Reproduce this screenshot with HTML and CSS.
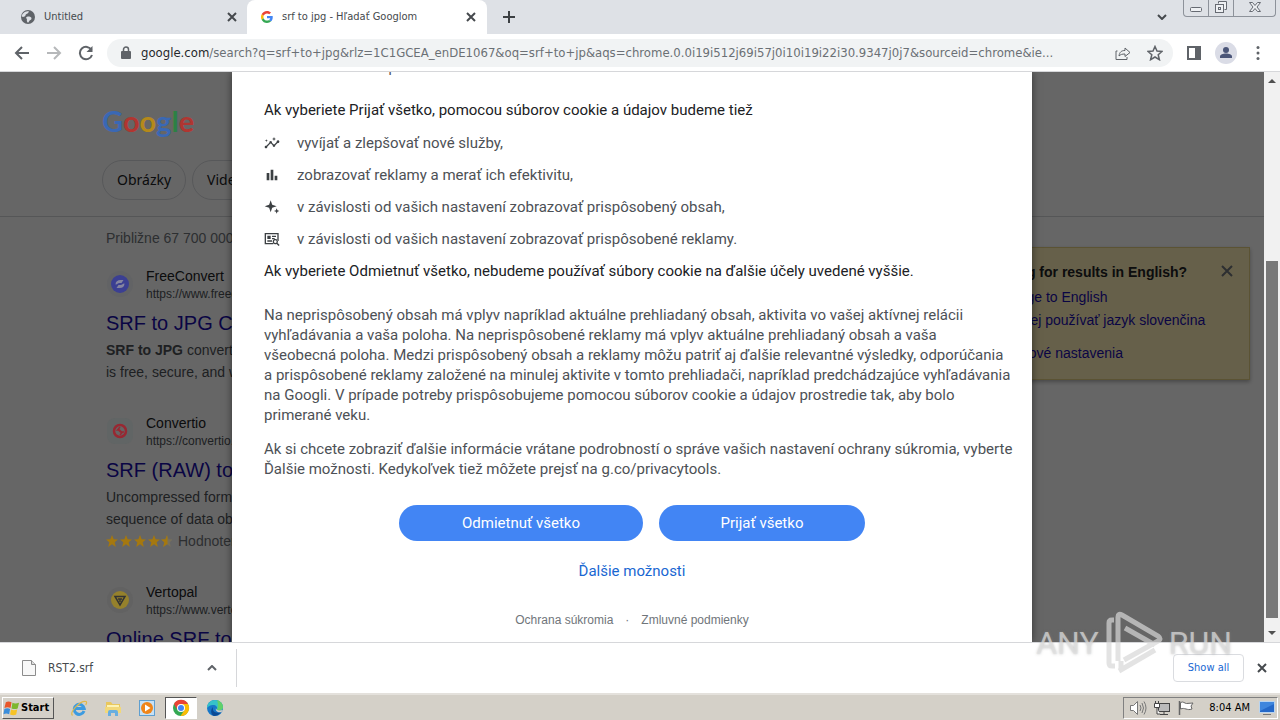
FILE: index.html
```html
<!DOCTYPE html>
<html lang="sk">
<head>
    <meta charset="UTF-8">
    <meta name="viewport" content="width=device-width, initial-scale=1.0">
    <title>srf to jpg - Hľadať Googlom</title>
    <link rel="stylesheet" href="styles.css">
</head>
<body>
    <header class="tab-strip">
        <div class="tab">
            <svg class="tab-icon" viewBox="0 0 16 16"><circle cx="8" cy="8" r="7" fill="#5f6368"/><path d="M3 4.500c2-2 4-2.500 6-2-1 1.500-1 2-2.500 2.500S6 7 4.500 7.500 3 8 1.800 7.500C2 6 2.300 5.200 3 4.500zM8 7.500c2 0 3.500.5 3.500 2s-2 1.500-2.500 3-1.500 1.500-2 0 .5-2-.5-3 0-2 1.500-2z" fill="#dee1e6"/></svg>
            <span class="tab-title">Untitled</span>
            <button class="tab-close" aria-label="Close tab"><svg viewBox="0 0 10 10"><path d="M1 1l8 8M9 1l-8 8"/></svg></button>
        </div>
        <div class="tab tab-active">
            <svg class="tab-icon" viewBox="0 0 48 48"><path fill="#EA4335" d="M24 9.500c3.540 0 6.710 1.220 9.210 3.600l6.850-6.850C35.900 2.380 30.470 0 24 0 14.620 0 6.510 5.380 2.560 13.220l7.980 6.190C12.430 13.720 17.740 9.500 24 9.500z"/><path fill="#4285F4" d="M46.980 24.550c0-1.570-.15-3.090-.38-4.550H24v9.020h12.940c-.58 2.960-2.260 5.480-4.780 7.180l7.730 6c4.510-4.180 7.090-10.360 7.090-17.650z"/><path fill="#FBBC05" d="M10.530 28.590c-.48-1.450-.76-2.990-.76-4.590s.27-3.140.76-4.590l-7.980-6.190C.92 16.460 0 20.120 0 24c0 3.880.92 7.540 2.560 10.780l7.970-6.190z"/><path fill="#34A853" d="M24 48c6.480 0 11.930-2.130 15.890-5.810l-7.730-6c-2.150 1.450-4.920 2.300-8.160 2.300-6.260 0-11.570-4.220-13.470-9.910l-7.980 6.190C6.510 42.620 14.620 48 24 48z"/></svg>
            <span class="tab-title">srf to jpg - Hľadať Googlom</span>
            <button class="tab-close" aria-label="Close tab"><svg viewBox="0 0 10 10"><path d="M1 1l8 8M9 1l-8 8"/></svg></button>
        </div>
        <button class="new-tab" aria-label="New tab"><svg viewBox="0 0 12 12"><path d="M6 0v12M0 6h12"/></svg></button>
        <button class="tab-search" aria-label="Search tabs"><svg viewBox="0 0 10 6"><path d="M1 1l4 4 4-4"/></svg></button>
        <div class="window-buttons">
            <button aria-label="Minimize"><svg viewBox="0 0 14 14"><rect x="1.500" y="7.500" width="11" height="4" rx="1"/></svg></button>
            <button aria-label="Restore"><svg viewBox="0 0 14 14"><path d="M4.500 3.500v-2h8v8h-2"/><rect x="1.500" y="4.500" width="8" height="8"/><rect x="4.500" y="7.500" width="2" height="2"/></svg></button>
            <button class="window-close" aria-label="Close"><svg viewBox="0 0 14 14"><path d="M1.500 2.500h3l2.500 3 2.500-3h3L9 7l3.500 4.500h-3L7 8.500l-2.500 3h-3L5 7z"/></svg></button>
        </div>
    </header>

    <nav class="toolbar">
        <div class="nav-buttons">
            <button class="tool" aria-label="Back"><svg viewBox="0 0 16 16"><path d="M15 8H2M8 2L2 8l6 6"/></svg></button>
            <button class="tool tool-off" aria-label="Forward"><svg viewBox="0 0 16 16"><path d="M1 8h13M8 2l6 6-6 6"/></svg></button>
            <button class="tool" aria-label="Reload"><svg viewBox="0 0 16 16"><path d="M13.500 5A6.200 6.200 0 1 0 14 10"/><path d="M14.500 1v6h-6z" fill="#5f6368" stroke="none"/></svg></button>
        </div>
        <div class="address">
            <svg class="lock" viewBox="0 0 10 14"><rect x="0" y="5" width="10" height="8" rx="1" fill="#5f6368"/><path d="M2.500 6V3.500a2.500 2.500 0 0 1 5 0V6" fill="none" stroke="#5f6368" stroke-width="1.500"/></svg>
            <div class="url"><span class="host">google.com</span>/search?q=srf+to+jpg&amp;rlz=1C1GCEA_enDE1067&amp;oq=srf+to+jp&amp;aqs=chrome.0.0i19i512j69i57j0i10i19i22i30.9347j0j7&amp;sourceid=chrome&amp;ie...</div>
            <button class="tool tool-thin" aria-label="Share"><svg viewBox="0 0 16 16"><path d="M2.500 6H1v8.500h11V12M4 11c.5-4 2.500-5.500 6-5.500V3l5 4.500-5 4V9c-3 0-4.500.5-6 2z"/></svg></button>
            <button class="tool tool-star" aria-label="Bookmark"><svg viewBox="0 0 16 16"><path d="M8 1.500l2 4.600 5 .4-3.800 3.300 1.200 4.900L8 12l-4.400 2.700 1.200-4.900L1 6.500l5-.4z"/></svg></button>
        </div>
        <button class="tool" aria-label="Side panel"><svg viewBox="0 0 16 16"><rect x="2" y="2" width="12" height="12"/><path d="M10 2h4v12h-4z" fill="#5f6368"/></svg></button>
        <button class="tool avatar" aria-label="Profile"><svg viewBox="0 0 22 22"><circle cx="11" cy="11" r="11" fill="#dadce6"/><circle cx="11" cy="8" r="3" fill="#4a5578"/><path d="M5 16v-1.500c0-2 3-3 6-3s6 1 6 3V16z" fill="#4a5578"/></svg></button>
        <button class="tool" aria-label="Menu"><svg viewBox="0 0 16 16"><g fill="#5f6368" stroke="none"><circle cx="8" cy="2.500" r="1.500"/><circle cx="8" cy="8" r="1.500"/><circle cx="8" cy="13.500" r="1.500"/></g></svg></button>
    </nav>

    <main class="viewport">
        <div class="page">
            <div class="page-top">
                <div class="logo"><span class="g-blue">G</span><span class="g-red">o</span><span class="g-yellow">o</span><span class="g-blue">g</span><span class="g-green">l</span><span class="g-red">e</span></div>
                <div class="chips">
                    <a class="chip" href="#">Obrázky</a>
                    <a class="chip" href="#">Videá</a>
                </div>
            </div>
            <div class="columns">
                <div class="results">
                    <p class="stats">Približne 67 700 000 výsledkov</p>
                    <article class="result">
                        <div class="source">
                            <svg class="favicon" viewBox="0 0 28 28"><circle cx="14" cy="14" r="13" fill="#626365"/><circle cx="14" cy="14" r="9" fill="#3b3f92"/><path d="M9.500 14.500c0-3 2-4.500 5-4.500h3l-2 3h-2c-2 0-2.500 2-4 1.500zM18.500 13.500c0 3-2 4.500-5 4.500h-3l2-3h2c2 0 2.500-2 4-1.500z" fill="#8585a0"/></svg>
                            <div><div class="site">FreeConvert</div><div class="link">https://www.freeconvert.com</div></div>
                        </div>
                        <h3><a href="#">SRF to JPG Converter</a></h3>
                        <p><b>SRF to JPG</b> converter. Best way<br>is free, secure, and works</p>
                    </article>
                    <article class="result">
                        <div class="source">
                            <svg class="favicon" viewBox="0 0 28 28"><rect x="1" y="1" width="26" height="26" rx="8" fill="#616565"/><circle cx="14" cy="14" r="6" fill="#666" stroke="#982832" stroke-width="2.500"/><path d="M14 10l-2.500 3h2l2 2H18M14 18l2.500-3h-2l-2-2" fill="none" stroke="#982832" stroke-width="1.500"/></svg>
                            <div><div class="site">Convertio</div><div class="link">https://convertio.co</div></div>
                        </div>
                        <h3><a href="#">SRF (RAW) to JPG</a></h3>
                        <p>Uncompressed format<br>sequence of data objects</p>
                        <div class="rating">
                            <svg class="stars" viewBox="0 0 66 12"><defs><path id="star" d="M6 0l1.700 4.200 4.300.2-3.300 2.800L9.800 12 6 9.300 2.200 12l1.100-4.800L0 4.400l4.300-.2z"/><clipPath id="half"><path d="M0 0h6.500v12H0z"/></clipPath></defs><g fill="#a5780f"><use href="#star"/><use href="#star" x="14"/><use href="#star" x="28"/><use href="#star" x="42"/><use href="#star" transform="translate(55)" fill="#77705c"/><g transform="translate(55)"><use href="#star" clip-path="url(#half)"/></g></g></svg>
                            <span>Hodnotenie: 4,7</span>
                        </div>
                    </article>
                    <article class="result">
                        <div class="source">
                            <svg class="favicon" viewBox="0 0 28 28"><circle cx="14" cy="14" r="13" fill="#626262"/><circle cx="14" cy="14" r="9" fill="#95812c"/><path d="M9 10.500h10L14 19z M12 13h4M14 13v3" fill="none" stroke="#333" stroke-width="1.500"/></svg>
                            <div><div class="site">Vertopal</div><div class="link">https://www.vertopal.com</div></div>
                        </div>
                        <h3><a href="#">Online SRF to JPG</a></h3>
                    </article>
                </div>
                <aside class="language-card">
                    <button class="card-close" aria-label="Close"><svg viewBox="0 0 12 12"><path d="M1 1l10 10M11 1L1 11"/></svg></button>
                    <h2>Looking for results in English?</h2>
                    <a href="#">Change to English</a>
                    <a href="#">Naďalej používať jazyk slovenčina</a>
                    <a class="card-settings" href="#">Jazykové nastavenia</a>
                </aside>
            </div>
        </div>

        <div class="scrollbar">
            <svg viewBox="0 0 8 4"><path d="M0 4l4-4 4 4z"/></svg>
            <div class="scroll-thumb"></div>
            <svg viewBox="0 0 8 4"><path d="M0 0l4 4 4-4z"/></svg>
        </div>

        <div class="backdrop">
            <section class="dialog" role="dialog" aria-label="Cookies">
                <p class="dialog-intro">kvalitu služieb podľa</p>
                <h2>Ak vyberiete Prijať všetko, pomocou súborov cookie a údajov budeme tiež</h2>
                <ul>
                    <li><svg viewBox="0 0 24 24"><path d="M21 8c-1.450 0-2.260 1.440-1.930 2.510l-3.550 3.560c-.3-.09-.74-.09-1.040 0l-2.550-2.550C12.270 10.450 11.460 9 10 9c-1.450 0-2.270 1.440-1.930 2.520l-4.560 4.550C2.440 15.740 1 16.550 1 18c0 1.100.9 2 2 2 1.450 0 2.260-1.440 1.930-2.510l4.550-4.560c.3.090.74.090 1.040 0l2.550 2.550C12.730 16.550 13.540 18 15 18c1.450 0 2.270-1.440 1.930-2.520l3.560-3.550C21.560 12.260 23 11.450 23 10c0-1.100-.9-2-2-2zM15 9l.94-2.070L18 6l-2.060-.93L15 3l-.92 2.070L12 6l2.080.93zM3.500 11L4 9l2-.5L4 8l-.5-2L3 8l-2 .5L3 9z"/></svg>vyvíjať a zlepšovať nové služby,</li>
                    <li><svg viewBox="0 0 24 24"><path d="M4 9h4v11H4zM16 13h4v7h-4zM10 4h4v16h-4z"/></svg>zobrazovať reklamy a merať ich efektivitu,</li>
                    <li><svg viewBox="0 0 24 24"><path d="M10 2l2.300 6.700L19 11l-6.700 2.300L10 20l-2.300-6.700L1 11l6.700-2.300zM19 14l1.200 2.800L23 18l-2.800 1.200L19 22l-1.200-2.800L15 18l2.800-1.200z"/></svg>v závislosti od vašich nastavení zobrazovať prispôsobený obsah,</li>
                    <li><svg viewBox="0 0 24 24"><path d="M1 3h21v12h-2V5H3v13h11v2H1zM5 7h5v5H5zM12 7h6v2h-6zM12 10.500h4v2h-4zM5 14h7v2H5zM17 12a4 4 0 0 1 3.400 6l3 3-1.500 1.500-3-3A4 4 0 1 1 17 12zm0 2a2 2 0 1 0 0 4 2 2 0 0 0 0-4z" fill-rule="evenodd"/></svg>v závislosti od vašich nastavení zobrazovať prispôsobené reklamy.</li>
                </ul>
                <p class="reject-note">Ak vyberiete Odmietnuť všetko, nebudeme používať súbory cookie na ďalšie účely uvedené vyššie.</p>
                <p class="about">Na neprispôsobený obsah má vplyv napríklad aktuálne prehliadaný obsah, aktivita vo vašej aktívnej relácii<br>vyhľadávania a vaša poloha. Na neprispôsobené reklamy má vplyv aktuálne prehliadaný obsah a vaša<br>všeobecná poloha. Medzi prispôsobený obsah a reklamy môžu patriť aj ďalšie relevantné výsledky, odporúčania<br>a prispôsobené reklamy založené na minulej aktivite v tomto prehliadači, napríklad predchádzajúce vyhľadávania<br>na Googli. V prípade potreby prispôsobujeme pomocou súborov cookie a údajov prostredie tak, aby bolo<br>primerané veku.</p>
                <p class="more-info">Ak si chcete zobraziť ďalšie informácie vrátane podrobností o správe vašich nastavení ochrany súkromia, vyberte<br>Ďalšie možnosti. Kedykoľvek tiež môžete prejsť na g.co/privacytools.</p>
                <div class="choices">
                    <button class="choice choice-reject">Odmietnuť všetko</button>
                    <button class="choice choice-accept">Prijať všetko</button>
                </div>
                <a class="more-options" href="#">Ďalšie možnosti</a>
                <div class="dialog-footer">
                    <a href="#">Ochrana súkromia</a><span>·</span><a href="#">Zmluvné podmienky</a>
                </div>
            </section>
        </div>
    </main>

    <div class="downloads">
        <button class="download">
            <svg class="file-icon" viewBox="0 0 14 16"><path d="M.5.5h9l4 4v11H.5z" fill="#f8f8f8" stroke="#8c8c8c"/><path d="M9.500.5v4h4" fill="#ddd" stroke="#8c8c8c"/></svg>
            <span>RST2.srf</span>
            <svg class="chevron" viewBox="0 0 10 6"><path d="M1 5l4-4 4 4"/></svg>
        </button>
        <button class="show-all">Show all</button>
        <button class="close-shelf" aria-label="Close"><svg viewBox="0 0 10 10"><path d="M1 1l8 8M9 1l-8 8"/></svg></button>
        <div class="watermark">
            <span>ANY</span>
            <svg viewBox="0 0 58 64"><path d="M9 9H7q-3 0-3 3v40q0 3 3 3h3M13 50V6q0-4 4-2l36 21q4 3 0 5L19 49M20 17l30 17M14 60l36-21M16 50v8"/></svg>
            <span>RUN</span>
        </div>
    </div>

    <footer class="taskbar">
        <button class="start"><svg viewBox="0 0 18 16"><path d="M3 2c2-1.500 4-1 6 0L8 8c-2-1-4-1.200-6.500 0z" fill="#e8562a"/><path d="M10 2.500c2 1 4 1 7 0l-1.500 6c-2 .8-4 1-6.500 0z" fill="#7db72f"/><path d="M1.500 9c2-1 4-1 6 0l-1 5.500c-2-1-4-1-6 0z" fill="#3a8ddb"/><path d="M8.500 9.500c2 1 4 1 6.500 0L14 15c-2 1-4 1-6.500 0z" fill="#f7c325"/></svg>Start</button>
        <div class="quick">
            <button aria-label="Internet Explorer"><svg viewBox="0 0 18 18"><path d="M14 12A5 5 0 1 1 14.200 9.500H5" fill="none" stroke="#3d9be0" stroke-width="3"/><path d="M2.500 16.500C-1 13 11 1 16 2.500c1 .5.500 2-.3 3.500" fill="none" stroke="#e0b84a" stroke-width="1.200"/></svg></button>
            <button aria-label="Explorer"><svg viewBox="0 0 18 18"><path d="M2 3h5l1.500 2H16v9H2z" fill="#e9c75d"/><path d="M3 6h12v3H3z" fill="#fdf3b5"/><path d="M1 8h16v6H1z" fill="#f2d879"/><path d="M4 17v-4q0-2 2-2h6q2 0 2 2v4h-3v-3H7v3z" fill="#67aee0"/></svg></button>
            <button aria-label="Media Player"><svg viewBox="0 0 18 18"><rect x="1.500" y="1.500" width="15" height="15" fill="#c7e1f5" stroke="#5f9fd0"/><circle cx="9" cy="9" r="6" fill="#f08519"/><path d="M7 5.500v7L12.500 9z" fill="#fff"/></svg></button>
            <button class="task-active" aria-label="Chrome"><svg viewBox="0 0 18 18"><circle cx="9" cy="9" r="8" fill="#34a853"/><path d="M2 5A8 8 0 0 1 16 5H9L5.500 11z" fill="#ea4335"/><path d="M16 5a8 8 0 0 1-7.500 12L12.500 11 9 5z" fill="#fbbc05"/><circle cx="9" cy="9" r="4" fill="#fff"/><circle cx="9" cy="9" r="3" fill="#4285f4"/></svg></button>
            <button aria-label="Edge"><svg viewBox="0 0 18 18"><circle cx="9" cy="9" r="8" fill="#1677c8"/><path d="M1 9C1 4 5 1 9 1s8 3 8 7c0 3-3 4-6 3 1-3-1-5-4-5-3 0-5 1.500-6 3z" fill="#36c2c9"/><path d="M11 1.300c3 .7 6 3 6 6.700 0 3-3 4-6 3 1.500-4 1-7 0-9.700z" fill="#61d06a"/><path d="M7 8c-1 4 2 7 8 5-2 3-5 4-7 4-3-1-4-6-1-9z" fill="#0c4a94"/><path d="M10 9c0 2 2 3 7 2l-1.500 2C12 14 9 12 10 9z" fill="#d4d0c8"/></svg></button>
        </div>
        <div class="tray">
            <svg viewBox="0 0 18 16"><path d="M1.500 5.500h3l4-4v13l-4-4h-3z" fill="#fff" stroke="#777"/><path d="M11 5q2 3 0 6M13 3q3 5 0 10M15 1.500q4 6.500 0 13" fill="none" stroke="#777"/></svg>
            <svg viewBox="0 0 18 16"><rect x="5.500" y="3.500" width="11" height="8" fill="#bbb" stroke="#444"/><path d="M7 14.500h8M11 12v2" stroke="#444"/><path d="M1.500 3.500h5v4h-5zM2.500 1v2M5.500 1v2M4 8v6h3" fill="#fff" stroke="#444"/></svg>
            <svg viewBox="0 0 18 16"><path d="M2.500 1v14" stroke="#666" stroke-width="1.500"/><path d="M3.500 2.500c3-1.500 4 1 6 1l6.500-.5-2 3 1 3c-3 1-4 .5-6 0s-3-1-5.500 0z" fill="#fff" stroke="#666"/></svg>
            <span class="clock">8:04 AM</span>
            <svg viewBox="0 0 18 16"><rect x="1.500" y="1.500" width="15" height="11" fill="#2468c8" stroke="#b9d4ef"/><path d="M2 11l14-7v-2H2z" fill="#3f86dd"/><path d="M5 14.500h8" stroke="#777"/></svg>
        </div>
    </footer>
</body>
</html>
```

FILE: styles.css
```css
* {
    box-sizing: border-box;
}
body {
    margin: 0;
    height: 100vh;
    display: flex;
    flex-direction: column;
    overflow: hidden;
    background: #fff;
    font-family: "Liberation Sans", Arial, sans-serif;
    font-size: 14px;
    line-height: 20px;
    color: #4d5156;
}
h2, h3, p, ul {
    margin: 0;
    padding: 0;
    font-size: inherit;
    font-weight: normal;
}
a {
    text-decoration: none;
    color: inherit;
}
button {
    padding: 0;
    border: none;
    background: none;
    font: inherit;
    color: inherit;
    cursor: pointer;
}
svg {
    display: block;
    flex: none;
}

/* tabs */
.tab-strip {
    display: flex;
    height: 34px;
    flex: none;
    background: #dee1e6;
    font-family: "DejaVu Sans Condensed", Tahoma, sans-serif;
    font-size: 11px;
    color: #45494d;
}
.tab {
    display: flex;
    align-items: center;
    width: 247px;
    padding: 0 10px 0 20px;
    gap: 8px;
}
.tab-active {
    width: 240px;
    padding: 0 11px 0 14px;
    background: #fff;
    border-radius: 8px 8px 0 0;
}
.tab-active .tab-icon {
    width: 12px;
    height: 12px;
    margin-right: 1px;
}
.tab-icon {
    width: 16px;
    height: 16px;
}
.tab-title {
    flex: 1;
    white-space: nowrap;
}
.tab-close svg, .close-shelf svg {
    width: 10px;
    height: 10px;
    fill: none;
    stroke: #45494d;
    stroke-width: 2;
}
.new-tab, .tab-search {
    padding: 0 16px;
}
.new-tab svg {
    width: 12px;
    height: 12px;
    stroke: #3c4043;
    stroke-width: 2;
}
.tab-search {
    margin-left: auto;
}
.tab-search svg {
    width: 10px;
    height: 6px;
    fill: none;
    stroke: #45494d;
    stroke-width: 2;
}
.window-buttons {
    display: flex;
    height: 17px;
    margin-right: 4px;
    border: 1px solid #8d929a;
    border-top: none;
    border-radius: 0 0 4px 4px;
}
.window-buttons button {
    width: 25px;
    display: flex;
    justify-content: center;
    border-right: 1px solid #8d929a;
}
.window-buttons .window-close {
    width: 41px;
    border-right: none;
}
.window-buttons svg {
    width: 14px;
    height: 14px;
    fill: #eef0f3;
    stroke: #666a72;
}

/* toolbar */
.toolbar {
    display: flex;
    align-items: center;
    height: 38px;
    flex: none;
    padding: 0 14px;
    gap: 13px;
    border-bottom: 1px solid #d6d7da;
}
.nav-buttons {
    display: flex;
    gap: 16px;
}
.tool svg {
    width: 16px;
    height: 16px;
    fill: none;
    stroke: #5f6368;
    stroke-width: 2;
}
.tool-off svg {
    stroke: #b6b8ba;
}
.tool-thin svg {
    stroke-width: 1;
}
.tool-star svg {
    stroke-width: 1.5;
}
.avatar svg {
    width: 22px;
    height: 22px;
    stroke: none;
}
.address {
    display: flex;
    align-items: center;
    flex: 1;
    min-width: 0;
    height: 28px;
    padding: 0 10px 0 14px;
    gap: 16px;
    background: #f1f3f4;
    border-radius: 14px;
}
.lock {
    width: 10px;
    height: 14px;
}
.url {
    flex: 1;
    min-width: 0;
    margin-left: -6px;
    white-space: nowrap;
    font-family: "DejaVu Sans Condensed", Tahoma, sans-serif;
    font-size: 13px;
    color: #6b7075;
}
.host {
    color: #26282b;
}

/* search page */
.viewport {
    position: relative;
    display: flex;
    flex: 1;
    min-height: 0;
    overflow: hidden;
}
.page {
    flex: 1;
    min-width: 0;
}
.page-top {
    padding: 32px 0 16px 102px;
    border-bottom: 1px solid #d5d7da;
}
.logo {
    position: relative;
    z-index: 2;
    width: max-content;
    font-family: Lato, sans-serif;
    font-size: 29px;
    font-weight: bold;
    line-height: 34px;
}
.g-blue { color: #3a68b4; }
.g-red { color: #b03631; }
.g-yellow { color: #b5891a; }
.g-green { color: #2c8144; }
.chips {
    display: flex;
    gap: 6px;
    margin-top: 22px;
}
.chip {
    padding: 9px 14px;
    border: 1px solid #dadce0;
    border-radius: 20px;
    font-family: "Noto Sans", sans-serif;
    color: #202124;
}
.columns {
    display: flex;
    justify-content: space-between;
    padding: 11px 14px 0 106px;
}
.stats {
    color: #70757a;
}
.result {
    width: 600px;
    padding-top: 18px;
    margin-bottom: 12px;
}
.source {
    display: flex;
    align-items: center;
    gap: 12px;
    color: #202124;
}
.site {
    line-height: 20px;
}
.link {
    font-size: 12px;
    line-height: 16px;
    color: #4d5156;
}
.favicon {
    position: relative;
    z-index: 2;
    width: 28px;
    height: 28px;
}
.result h3 {
    margin: 8px 0 3px;
    font-size: 20px;
    line-height: 26px;
    color: #1a0dab;
}
.result p {
    line-height: 22px;
}
.rating {
    display: flex;
    align-items: center;
    gap: 6px;
    line-height: 22px;
    color: #70757a;
}
.stars {
    position: relative;
    z-index: 2;
    width: 66px;
    height: 12px;
}
.language-card {
    position: relative;
    align-self: flex-start;
    width: 288px;
    margin-top: 19px;
    padding: 14px 18px;
    background: #fff0b8;
    border: 1px solid #e3cf82;
    box-shadow: 0 2px 4px rgba(0, 0, 0, 0.3);
    color: #1a0dab;
}
.language-card h2 {
    margin-bottom: 4px;
    font-weight: bold;
    color: #202124;
}
.language-card a {
    display: block;
    padding-left: 12px;
    line-height: 23px;
}
.language-card .card-settings {
    margin-top: 10px;
}
.card-close {
    position: absolute;
    top: 17px;
    right: 16px;
}
.card-close svg {
    width: 12px;
    height: 12px;
    stroke: #70757a;
    stroke-width: 2;
}
.scrollbar {
    display: flex;
    flex-direction: column;
    align-items: center;
    width: 16px;
    padding: 7px 0;
    background: #f1f1f1;
}
.scrollbar svg {
    width: 8px;
    height: 4px;
    fill: #505050;
}
.scroll-thumb {
    flex: 1;
    width: 12px;
    margin: 178px 0 13px;
    background: #797979;
}

/* consent dialog */
.backdrop {
    position: absolute;
    inset: 0 16px 0 0;
    z-index: 1;
    display: flex;
    justify-content: center;
    background: rgba(0, 0, 0, 0.6);
}
.dialog {
    display: flex;
    flex-direction: column;
    justify-content: flex-end;
    width: 800px;
    padding: 0 32px 12px;
    background: #fff;
    box-shadow: 0 0 8px rgba(0, 0, 0, 0.5);
    font-family: Roboto, sans-serif;
    font-size: 15px;
    white-space: nowrap;
}
.dialog-intro {
    margin: 0 0 23px 33px;
    font-size: 14px;
}
.dialog h2 {
    color: #202124;
    margin-bottom: 7px;
}
.dialog li {
    display: flex;
    align-items: center;
    gap: 17px;
    line-height: 32px;
}
.dialog li svg {
    width: 16px;
    height: 16px;
    fill: #3c4043;
}
.reject-note {
    margin: 6px 0 24px;
    color: #202124;
}
.about {
    margin-bottom: 14px;
}
.choices {
    display: flex;
    justify-content: center;
    gap: 16px;
    margin: 26px 0 20px;
}
.choice {
    height: 36px;
    border-radius: 18px;
    background: #4285f4;
    color: #fff;
}
.choice-reject {
    width: 244px;
}
.choice-accept {
    width: 206px;
}
.more-options {
    align-self: center;
    margin-bottom: 29px;
    color: #1967d2;
}
.dialog-footer {
    display: flex;
    justify-content: center;
    gap: 12px;
    font-family: "Liberation Sans", Arial, sans-serif;
    font-size: 12px;
    color: #70757a;
}

/* download shelf */
.downloads {
    position: relative;
    z-index: 3;
    display: flex;
    align-items: center;
    height: 51px;
    flex: none;
    padding-right: 13px;
    border-top: 1px solid #d6d7da;
    font-family: "DejaVu Sans Condensed", Tahoma, sans-serif;
    font-size: 12px;
    color: #45494d;
}
.download {
    display: flex;
    align-items: center;
    gap: 12px;
    width: 237px;
    height: 38px;
    padding: 0 19px 0 22px;
    border-right: 1px solid #d6d7da;
}
.file-icon {
    width: 14px;
    height: 16px;
}
.chevron {
    width: 10px;
    height: 6px;
    margin-left: auto;
    fill: none;
    stroke: #5f6368;
    stroke-width: 2;
}
.show-all {
    margin-left: auto;
    width: 71px;
    height: 28px;
    border: 1px solid #dadce0;
    border-radius: 4px;
    font-size: 11px;
    color: #1967d2;
}
.close-shelf {
    margin-left: 13px;
}
.watermark {
    position: absolute;
    right: 48px;
    bottom: 18px;
    display: flex;
    align-items: center;
    gap: 6px;
    font-family: Roboto, sans-serif;
    font-size: 32px;
    line-height: 64px;
    color: rgba(225, 225, 225, 0.7);
    text-shadow: 0 0 3px rgba(140, 140, 140, 0.5);
    pointer-events: none;
}
.watermark svg {
    width: 58px;
    height: 64px;
    fill: none;
    stroke: rgba(215, 215, 215, 0.7);
    stroke-width: 5;
}

/* taskbar */
.taskbar {
    display: flex;
    align-items: center;
    height: 27px;
    flex: none;
    padding: 0 2px;
    background: #d4d0c8;
    border-top: 2px solid #e4e1dc;
    font-family: "DejaVu Sans Condensed", Tahoma, sans-serif;
    font-size: 11px;
    color: #000;
}
.start {
    display: flex;
    align-items: center;
    gap: 1px;
    width: 52px;
    height: 22px;
    border: 1px solid #fff;
    border-right-color: #555;
    border-bottom-color: #555;
    font-weight: bold;
}
.start svg {
    width: 17px;
    height: 16px;
}
.quick {
    display: flex;
    margin-left: 8px;
}
.quick button {
    display: flex;
    align-items: center;
    justify-content: center;
    width: 34px;
    height: 22px;
}
.quick svg {
    width: 18px;
    height: 18px;
}
.quick .task-active {
    width: 32px;
    margin: 0 1px;
    background: #fff;
    border: 1px solid #555;
    border-right-color: #fff;
    border-bottom-color: #fff;
}
.tray {
    display: flex;
    align-items: center;
    gap: 6px;
    height: 22px;
    margin-left: auto;
    padding: 0 1px 0 5px;
    border: 1px solid #808080;
    border-right-color: #fff;
    border-bottom-color: #fff;
}
.tray svg {
    width: 18px;
    height: 16px;
}
.clock {
    margin: 0 2px 0 8px;
}
```
